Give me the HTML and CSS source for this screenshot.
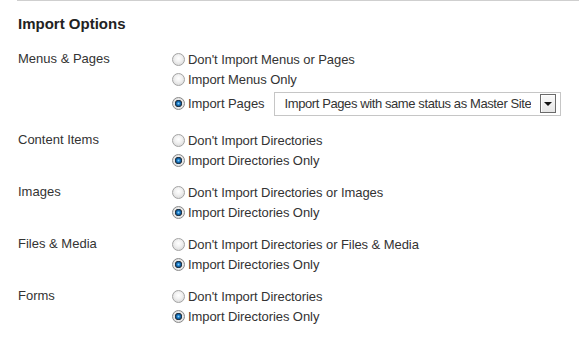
FILE: index.html
```html
<!DOCTYPE html>
<html lang="en">
<head>
  <meta charset="UTF-8">
  <title>Import Options</title>
  <link rel="stylesheet" href="styles.css">
</head>
<body>
  <div class="panel">
    <h2>Import Options</h2>

    <div class="option-group">
      <div class="group-label">Menus &amp; Pages</div>
      <div class="choices">
        <label class="choice"><input type="radio" name="menus"><span>Don't Import Menus or Pages</span></label>
        <label class="choice"><input type="radio" name="menus"><span>Import Menus Only</span></label>
        <label class="choice choice-select"><input type="radio" name="menus" checked><span>Import Pages</span>
          <div class="fake-select">
            <span class="select-text">Import Pages with same status as Master Site</span>
            <span class="arrow"></span>
          </div>
        </label>
      </div>
    </div>

    <div class="option-group">
      <div class="group-label">Content Items</div>
      <div class="choices">
        <label class="choice"><input type="radio" name="content"><span>Don't Import Directories</span></label>
        <label class="choice"><input type="radio" name="content" checked><span>Import Directories Only</span></label>
      </div>
    </div>

    <div class="option-group">
      <div class="group-label">Images</div>
      <div class="choices">
        <label class="choice"><input type="radio" name="images"><span>Don't Import Directories or Images</span></label>
        <label class="choice"><input type="radio" name="images" checked><span>Import Directories Only</span></label>
      </div>
    </div>

    <div class="option-group">
      <div class="group-label">Files &amp; Media</div>
      <div class="choices">
        <label class="choice"><input type="radio" name="files"><span>Don't Import Directories or Files &amp; Media</span></label>
        <label class="choice"><input type="radio" name="files" checked><span>Import Directories Only</span></label>
      </div>
    </div>

    <div class="option-group">
      <div class="group-label">Forms</div>
      <div class="choices">
        <label class="choice"><input type="radio" name="forms"><span>Don't Import Directories</span></label>
        <label class="choice"><input type="radio" name="forms" checked><span>Import Directories Only</span></label>
      </div>
    </div>
  </div>
</body>
</html>
```

FILE: styles.css
```css
body {
  font-family: "Liberation Sans", Arial, sans-serif;
  font-size: 13px;
  color: #333;
  background: #fff;
  margin: 0;
}
.panel {
  margin-left: 17px;
  padding-left: 1px;
  border-top: 1px solid #cfcfcf;
}
h2 {
  font-size: 15px;
  font-weight: 700;
  line-height: 17px;
  color: #222;
  margin: 14px 0 17px 0;
}
.option-group {
  display: grid;
  grid-template-columns: 154px 1fr;
  margin-bottom: 12px;
}
.group-label {
  line-height: 20px;
}
.choices {
  display: flex;
  flex-direction: column;
}
.choice {
  display: flex;
  align-items: center;
  height: 20px;
  white-space: nowrap;
  letter-spacing: -0.07px;
}
.choice-select {
  height: 27px;
  margin-top: 1px;
  margin-bottom: 1px;
}
.choice input {
  -webkit-appearance: none;
  appearance: none;
  flex: none;
  width: 13px;
  height: 13px;
  margin: 0 3px 0 0;
  border: 1px solid #a3a3a3;
  border-radius: 50%;
  background: radial-gradient(circle at 50% 40%, #fff 0, #f1f1f1 40%, #d2d2d2 100%);
  box-sizing: border-box;
}
.choice input:checked {
  border-color: #8a8a8a;
  background: radial-gradient(circle at 50% 50%, #8fd2ff 0, #2487d0 1.3px, #0c4b84 2.6px, #2a2a2a 3.4px, #e9e9e9 4px, #d4d4d4 100%);
}
.fake-select {
  display: flex;
  align-items: center;
  justify-content: space-between;
  flex: none;
  width: 287px;
  height: 24px;
  margin-left: 10px;
  padding: 0 4px 0 9px;
  border: 1px solid #c6c6c6;
  box-sizing: border-box;
  background: #fff;
}
.select-text {
  letter-spacing: -0.4px;
  overflow: hidden;
}
.arrow {
  position: relative;
  flex: none;
  width: 16px;
  height: 19px;
  margin-left: 4px;
  border: 1px solid #6a6a6a;
  box-sizing: border-box;
  background: linear-gradient(#fafafa, #e6e6e6);
  box-shadow: inset 1px 1px 0 #fff;
}
.arrow::after {
  content: "";
  position: absolute;
  left: 3px;
  top: 7px;
  border-left: 4px solid transparent;
  border-right: 4px solid transparent;
  border-top: 4px solid #111;
}
```
